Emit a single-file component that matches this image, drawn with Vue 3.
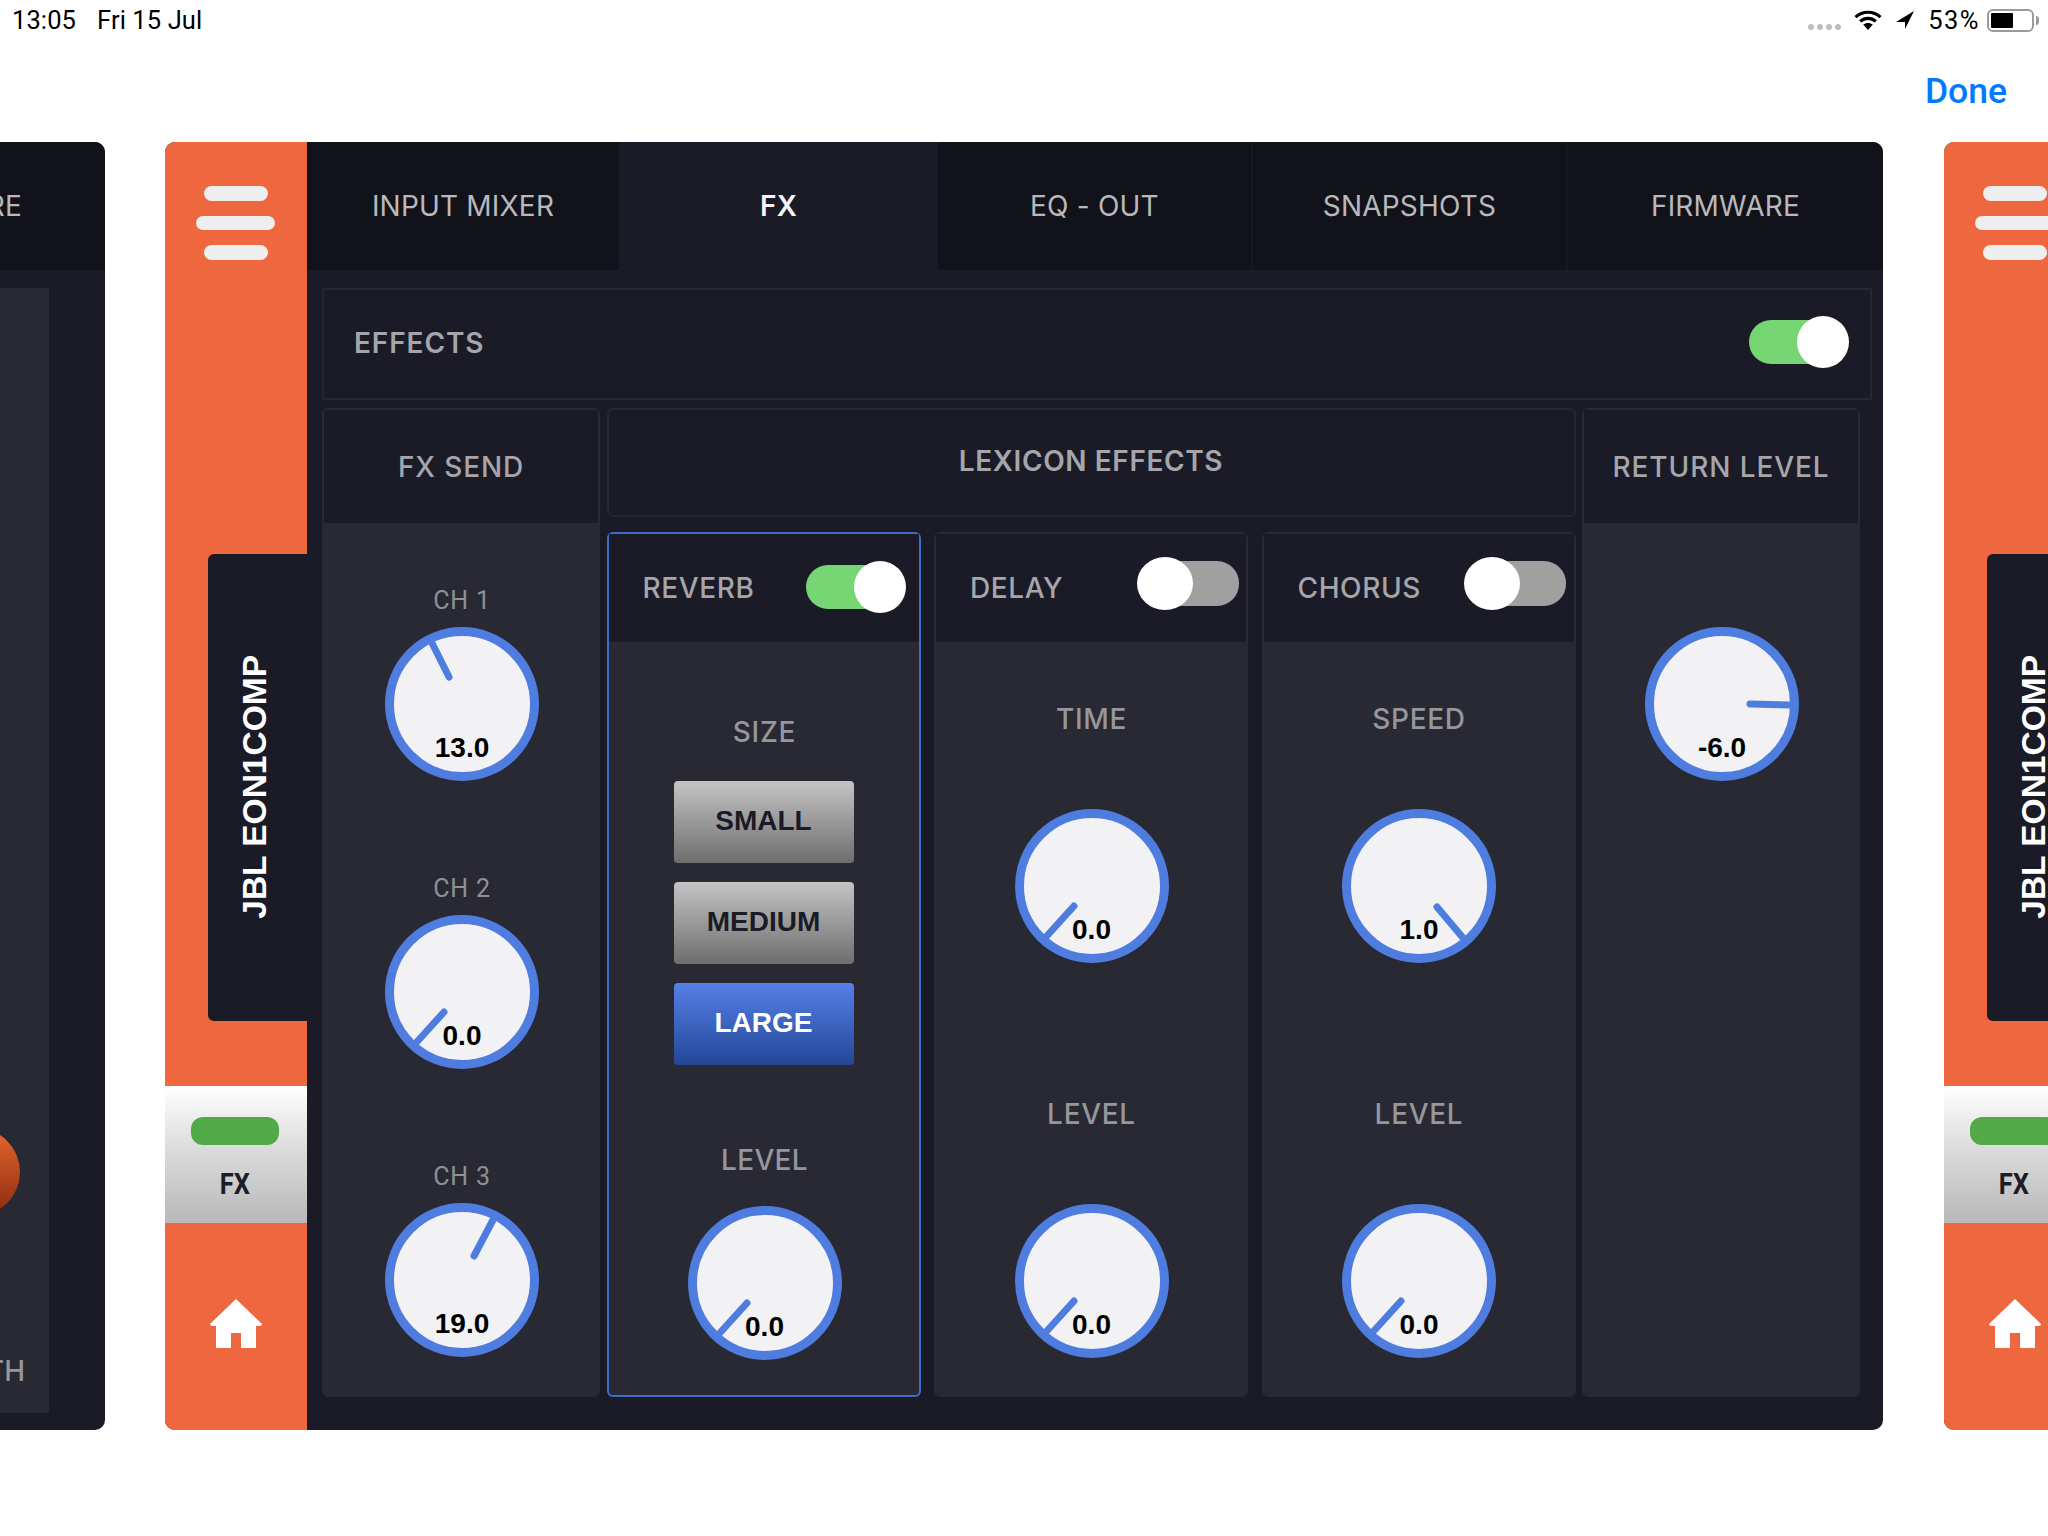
<script setup>
import { h } from 'vue'

const Knob = (p) =>
  h('div', { class: 'knob' }, [
    h('svg', { width: 154, height: 154, viewBox: '-77 -77 154 154' }, [
      h('circle', { r: 72.5, fill: '#f2f2f4', stroke: '#4f7ddf', 'stroke-width': 9 }),
      h('line', {
        x1: p.n[0], y1: p.n[1], x2: p.n[2], y2: p.n[3],
        stroke: '#4f7ddf', 'stroke-width': 7, 'stroke-linecap': 'round'
      })
    ]),
    h('span', { class: 'knob-value' }, p.value)
  ])

const Toggle = (p) =>
  h('div', { class: ['toggle', p.on ? 'toggle-on' : 'toggle-off'] }, [
    h('span', { class: 'toggle-track' }),
    h('span', { class: 'toggle-thumb' })
  ])

const tabs = ['INPUT MIXER', 'FX', 'EQ - OUT', 'SNAPSHOTS', 'FIRMWARE']
const low = [-18, 20, -47, 52]
const sends = [
  { label: 'CH 1', value: '13.0', n: [-13, -27, -31, -63] },
  { label: 'CH 2', value: '0.0', n: low },
  { label: 'CH 3', value: '19.0', n: [12, -24, 32, -62] }
]
const sizes = ['SMALL', 'MEDIUM', 'LARGE']
const units = [
  { name: 'DELAY', first: 'TIME', value: '0.0', n: low },
  { name: 'CHORUS', first: 'SPEED', value: '1.0', n: [18, 21, 45, 53] }
]
</script>

<template>
  <div class="page">
    <header class="status">
      <div class="status-left"><span>13:05</span><span>Fri 15 Jul</span></div>
      <div class="status-right">
        <span class="signal"><i></i><i></i><i></i><i></i></span>
        <svg class="wifi" width="28" height="20" viewBox="0 0 28 20">
          <path d="M1.5 7.2C8.5 .6 19.5 .6 26.5 7.2" fill="none" stroke="#000" stroke-width="3.2" />
          <path d="M6.2 11.4C10.7 7.4 17.3 7.4 21.8 11.4" fill="none" stroke="#000" stroke-width="3.2" />
          <path d="M9.2 14.6C12 12.3 16 12.3 18.8 14.6L14 20Z" fill="#000" />
        </svg>
        <svg class="arrow" width="18" height="18" viewBox="0 0 18 18">
          <path d="M18 0L0 11H9V18Z" fill="#000" />
        </svg>
        <span class="percent">53%</span>
        <span class="battery"><i></i></span>
        <span class="nub"></span>
      </div>
    </header>
    <nav class="nav"><span class="done">Done</span></nav>

    <div class="strip">
      <section class="card card-dark">
        <div class="tabs">
          <div v-for="t in tabs" :key="t" class="tab" :class="{ active: t === 'FX' }">{{ t }}</div>
        </div>
        <div class="ghost-body">
          <div class="ghost-panel">
            <span class="ghost-ball"></span>
            <span class="ghost-label">DEPTH</span>
          </div>
        </div>
      </section>

      <section v-for="card in ['main', 'next']" :key="card" class="card">
        <aside class="side">
          <div class="menu"><i></i><i class="wide"></i><i></i></div>
          <div class="tag"><span>JBL EON1COMP</span></div>
          <div class="fx-block">
            <span class="fx-led"></span>
            <span class="fx-text">FX</span>
          </div>
          <svg class="home" width="52" height="49" viewBox="0 0 52 49">
            <path d="M26 0L52 25Q52 27 50 27H46V49H31V34H21V49H6V27H2Q0 27 0 25Z" fill="#fff" />
          </svg>
        </aside>

        <div v-if="card === 'main'" class="content">
          <div class="tabs">
            <div v-for="t in tabs" :key="t" class="tab" :class="{ active: t === 'FX' }">{{ t }}</div>
          </div>
          <div class="body">
            <div class="effects">
              <span class="label-strong effects-label">EFFECTS</span>
              <Toggle :on="true" />
            </div>
            <div class="row">
              <div class="col col-side">
                <div class="col-title">FX SEND</div>
                <div class="sends">
                  <div v-for="s in sends" :key="s.label" class="send">
                    <span class="ch">{{ s.label }}</span>
                    <Knob :value="s.value" :n="s.n" />
                  </div>
                </div>
              </div>

              <div class="lexicon">
                <div class="lexicon-title">LEXICON EFFECTS</div>
                <div class="units">
                  <div class="col col-selected">
                    <div class="unit-head">
                      <span class="label-strong">REVERB</span>
                      <Toggle :on="true" />
                    </div>
                    <div class="reverb">
                      <span class="label size-label">SIZE</span>
                      <button
                        v-for="z in sizes"
                        :key="z"
                        class="size"
                        :class="{ selected: z === 'LARGE' }"
                      >{{ z }}</button>
                      <span class="label level-label">LEVEL</span>
                      <Knob value="0.0" :n="low" />
                    </div>
                  </div>

                  <div v-for="u in units" :key="u.name" class="col">
                    <div class="unit-head">
                      <span class="label-strong">{{ u.name }}</span>
                      <Toggle :on="false" />
                    </div>
                    <div class="unit">
                      <span class="label">{{ u.first }}</span>
                      <Knob :value="u.value" :n="u.n" />
                      <span class="label unit-second">LEVEL</span>
                      <Knob value="0.0" :n="low" />
                    </div>
                  </div>
                </div>
              </div>

              <div class="col col-side">
                <div class="col-title">RETURN LEVEL</div>
                <div class="return">
                  <Knob value="-6.0" :n="[28, 0, 70, 1]" />
                </div>
              </div>
            </div>
          </div>
        </div>
      </section>
    </div>
  </div>
</template>

<style scoped>
.page {
  width: 2048px;
  height: 1536px;
  overflow: hidden;
  background: #fff;
  font-family: Inter, "Liberation Sans", sans-serif;
}
.status {
  height: 40px;
  display: flex;
  justify-content: space-between;
  align-items: center;
  color: #000;
  font-family: Roboto, sans-serif;
  font-size: 25.5px;
  letter-spacing: 0.1px;
}
.status-left {
  margin-left: 12px;
  display: flex;
  gap: 21px;
}
.status-right {
  display: flex;
  align-items: center;
  margin-right: 9px;
}
.signal {
  display: flex;
  gap: 3px;
  margin-top: 14px;
  margin-right: 13px;
}
.signal i {
  width: 6px;
  height: 6px;
  border-radius: 50%;
  background: #bdbdbd;
}
.wifi {
  margin-right: 14px;
}
.arrow {
  margin-right: 14px;
}
.percent {
  margin-right: 7px;
  letter-spacing: 1.5px;
}
.battery {
  width: 47px;
  height: 23px;
  box-sizing: border-box;
  border: 2px solid #9a9a9a;
  border-radius: 6px;
  padding: 2px;
  display: flex;
}
.battery i {
  width: 22px;
  background: #000;
  border-radius: 1px;
}
.nub {
  width: 3px;
  height: 9px;
  margin-left: 2px;
  background: #9a9a9a;
  border-radius: 0 3px 3px 0;
}
.nav {
  height: 102px;
  box-sizing: border-box;
  padding: 28px 41px 0 0;
  display: flex;
  justify-content: flex-end;
  align-items: flex-start;
}
.done {
  color: #007aff;
  font-family: Roboto, sans-serif;
  font-weight: 500;
  font-size: 35.5px;
  line-height: 46px;
}
.strip {
  display: flex;
  gap: 60px;
  margin-left: -1613px;
  height: 1288px;
}
.card {
  flex: none;
  width: 1718px;
  height: 1288px;
  border-radius: 10px;
  overflow: hidden;
  display: flex;
  background: #1a1b26;
}
.card:last-child {
  margin-left: 1px;
}
.card-dark {
  flex-direction: column;
}
.side {
  flex: none;
  width: 142px;
  background: #ee673e;
  display: flex;
  flex-direction: column;
  align-items: center;
  padding-top: 44px;
  box-sizing: border-box;
}
.menu {
  display: flex;
  flex-direction: column;
  align-items: center;
  gap: 15px;
  margin-right: 1px;
}
.menu i {
  display: block;
  width: 64px;
  height: 14.5px;
  border-radius: 8px;
  background: #eeeeee;
}
.menu i.wide {
  width: 79px;
}
.tag {
  align-self: flex-end;
  margin-top: 294px;
  width: 99px;
  height: 467px;
  background: #1a1b26;
  border-radius: 6px 0 0 6px;
  display: flex;
  align-items: center;
  justify-content: center;
  padding-right: 6px;
  box-sizing: border-box;
}
.tag span {
  writing-mode: vertical-rl;
  transform: rotate(180deg);
  color: #fff;
  font-family: "Liberation Sans", sans-serif;
  font-weight: 700;
  font-size: 33.5px;
  line-height: 1;
}
.fx-block {
  align-self: stretch;
  margin-top: 65px;
  height: 137px;
  background: linear-gradient(#ffffff, #dcdcdc 45%, #b8b8b8);
  display: flex;
  flex-direction: column;
  align-items: center;
  padding-top: 31px;
  box-sizing: border-box;
}
.fx-led {
  width: 88px;
  height: 28px;
  border-radius: 12px;
  background: #52a948;
  margin-right: 2px;
}
.fx-text {
  margin: 22px 2px 0 0;
  color: #1c1d27;
  font-family: Roboto, sans-serif;
  font-weight: 700;
  font-size: 30px;
  line-height: 34px;
  transform: scaleX(0.85);
}
.home {
  margin-top: 76px;
}
.content {
  flex: 1;
  min-width: 0;
  display: flex;
  flex-direction: column;
}
.tabs {
  flex: none;
  height: 129px;
  padding-bottom: 1px;
  box-sizing: border-box;
  display: grid;
  grid-template-columns: 312px 319px 313px 315px 317px;
}
.card-dark .tabs {
  margin-left: 142px;
}
.tab {
  display: flex;
  align-items: center;
  justify-content: center;
  background: #12131a;
  color: #b9b9bd;
  font-size: 28px;
  letter-spacing: 0.2px;
  border-left: 2px solid #171821;
}
.tab:first-child {
  border-left: 0;
}
.tab.active {
  background: #1a1b26;
  border-left: 0;
  color: #f4f4f6;
  font-weight: 600;
}
.tab.active + .tab {
  border-left: 0;
}
.body {
  flex: 1;
  min-height: 0;
  display: flex;
  flex-direction: column;
  padding: 17px 11px 33px 15px;
}
.effects {
  flex: none;
  height: 112px;
  box-sizing: border-box;
  border: 2px solid #252631;
  display: flex;
  align-items: center;
  justify-content: space-between;
  padding: 0 21px 2px 30px;
  margin-bottom: 8px;
}
.label-strong {
  color: #a5a5aa;
  font-size: 28px;
  font-weight: 500;
  letter-spacing: 0.6px;
}
.effects-label {
  font-weight: 600;
  letter-spacing: 0.9px;
}
.label {
  color: #96969b;
  font-size: 28px;
  font-weight: 500;
  line-height: 30px;
  letter-spacing: 0.7px;
  text-align: center;
}
.row {
  flex: 1;
  min-height: 0;
  display: flex;
  gap: 6.5px;
}
.col {
  box-sizing: border-box;
  min-width: 0;
  border: 2px solid #282933;
  border-radius: 6px;
  background: #282933;
  display: flex;
  flex-direction: column;
}
.col-side {
  flex: none;
  width: 278px;
}
.col-selected {
  border-color: #3f6cc6;
}
.col-title {
  flex: none;
  height: 113px;
  box-sizing: border-box;
  background: #1a1b26;
  color: #a5a5aa;
  font-size: 28px;
  font-weight: 500;
  letter-spacing: 0.9px;
  display: flex;
  align-items: center;
  justify-content: center;
}
.sends {
  display: flex;
  flex-direction: column;
  align-items: center;
  gap: 93px;
  padding: 63px 0 0 2px;
}
.send {
  display: flex;
  flex-direction: column;
  align-items: center;
  gap: 11px;
}
.ch {
  color: #909095;
  font-family: Roboto, sans-serif;
  font-size: 25px;
  line-height: 30px;
  letter-spacing: 0.8px;
}
.lexicon {
  flex: none;
  width: 969px;
  display: flex;
  flex-direction: column;
}
.lexicon-title {
  flex: none;
  height: 109px;
  box-sizing: border-box;
  border: 2px solid #252631;
  border-radius: 6px;
  margin-bottom: 15px;
  padding-bottom: 4px;
  color: #a5a5aa;
  font-size: 28px;
  font-weight: 600;
  letter-spacing: 0.6px;
  display: flex;
  align-items: center;
  justify-content: center;
}
.units {
  flex: 1;
  min-height: 0;
  display: grid;
  grid-template-columns: repeat(3, 1fr);
  gap: 13.5px;
}
.unit-head {
  flex: none;
  height: 108px;
  box-sizing: border-box;
  background: #1a1b26;
  display: flex;
  align-items: center;
  justify-content: space-between;
  padding: 0 7px 0 34px;
}
.col-selected .unit-head {
  padding-right: 13px;
}
.col:last-child > .unit-head {
  padding-right: 8px;
}
.reverb,
.unit {
  display: flex;
  flex-direction: column;
  align-items: center;
}
.reverb {
  padding: 75px 0 0 2px;
}
.size-label {
  margin-bottom: 34px;
}
.size {
  width: 180px;
  height: 82px;
  margin: 0 0 19px -2px;
  border: 0;
  border-radius: 4px;
  background: linear-gradient(#c4c4c4, #6e6e6e);
  color: #1a1b26;
  font-family: "Liberation Sans", sans-serif;
  font-weight: 700;
  font-size: 28px;
  padding: 0 0 2px;
}
.size.selected {
  background: linear-gradient(#5580e8, #234796);
  color: #fff;
}
.level-label {
  margin-top: 61px;
  margin-bottom: 31px;
  letter-spacing: 0.3px;
}
.unit {
  padding: 62px 0 0 1px;
  gap: 75px;
}
.unit-second {
  margin-top: 61px;
}
.return {
  display: flex;
  justify-content: center;
  padding: 104px 0 0 2px;
}
.ghost-body {
  flex: 1;
  min-height: 0;
  display: flex;
  justify-content: flex-end;
  padding: 17px 56px 17px 0;
}
.ghost-panel {
  position: relative;
  width: 600px;
  background: #282933;
  display: flex;
  flex-direction: column;
  justify-content: flex-end;
  align-items: flex-end;
  padding: 0 24px 22px 0;
  box-sizing: border-box;
}
.ghost-ball {
  position: absolute;
  right: 29px;
  top: 840px;
  width: 88px;
  height: 88px;
  border-radius: 50%;
  background: linear-gradient(#e9662f, #8a2a10);
}
.ghost-label {
  color: #96969b;
  font-size: 28px;
  font-weight: 500;
  line-height: 40px;
}
</style>

<style>
html,
body {
  margin: 0;
  background: #fff;
}
.knob {
  position: relative;
  flex: none;
  width: 154px;
  height: 154px;
}
.knob svg {
  display: block;
}
.knob-value {
  position: absolute;
  left: 0;
  right: 0;
  top: 105px;
  text-align: center;
  color: #000;
  font-family: "Liberation Sans", sans-serif;
  font-weight: 700;
  font-size: 28px;
  line-height: 32px;
}
.toggle {
  position: relative;
  flex: none;
  width: 100px;
  height: 52px;
  margin-top: -2px;
}
.toggle-track {
  position: absolute;
  top: 4px;
  bottom: 4px;
  left: 0;
  right: 8px;
  border-radius: 22px;
  background: #75d673;
}
.toggle-thumb {
  position: absolute;
  top: 0;
  right: 0;
  width: 52px;
  height: 52px;
  border-radius: 50%;
  background: #fff;
}
.toggle-off {
  width: 102px;
  height: 53px;
  margin-top: -9px;
}
.toggle-off .toggle-track {
  left: 10px;
  right: 0;
  background: #a0a0a0;
}
.toggle-off .toggle-thumb {
  left: 0;
  right: auto;
  width: 56px;
  height: 53px;
}
</style>
